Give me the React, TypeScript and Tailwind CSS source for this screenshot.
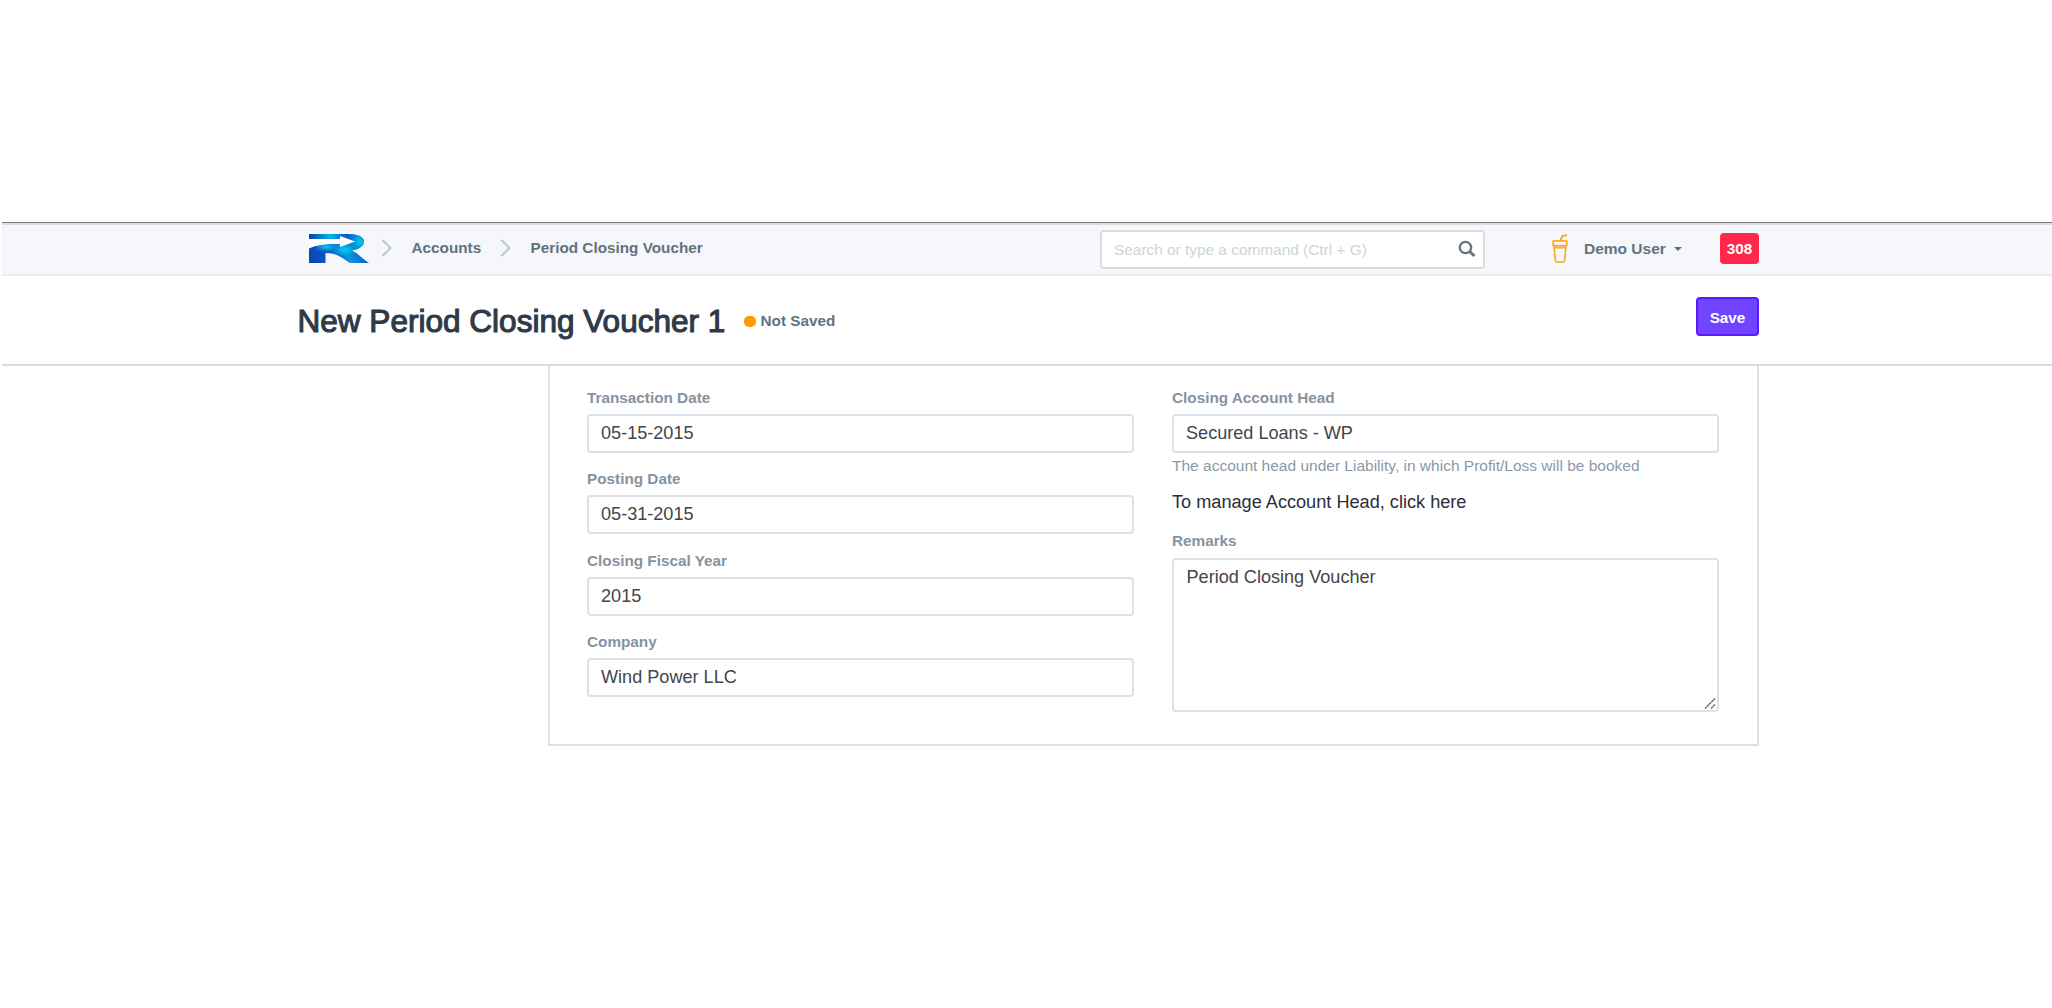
import React from "react";

function Logo() {
  return (
    <svg className="mt-[9px] block h-[29px] w-[60px] shrink-0" viewBox="0 0 60 29">
      <defs>
        <linearGradient id="top" x1="0" y1="0" x2="1" y2="0">
          <stop offset="0" stopColor="#0a3fae" />
          <stop offset="0.35" stopColor="#04b4ea" />
          <stop offset="0.62" stopColor="#0b5cc4" />
          <stop offset="0.85" stopColor="#0a9fe0" />
          <stop offset="1" stopColor="#0a5bc0" />
        </linearGradient>
        <linearGradient id="leg" x1="0" y1="0.6" x2="1" y2="0.4">
          <stop offset="0" stopColor="#0b48b8" />
          <stop offset="0.3" stopColor="#0b58c8" />
          <stop offset="0.6" stopColor="#0898dc" />
          <stop offset="1" stopColor="#0a4bb8" />
        </linearGradient>
        <radialGradient id="glow">
          <stop offset="0" stopColor="#00d0f0" />
          <stop offset="1" stopColor="#00c0ec" stopOpacity="0" />
        </radialGradient>
        <clipPath id="shape">
          <path d="M0 0H38C49 0 55 3 55 7.500C55 12 50 15.500 43 16.500C49.500 19.500 53 24.500 60 29H41C34 25 29 19 16.500 19V29H0Z" />
        </clipPath>
      </defs>
      <g clipPath="url(#shape)">
        <rect width="60" height="29" fill="url(#leg)" />
        <rect width="60" height="9" fill="url(#top)" />
        <ellipse cx="51" cy="9" rx="10" ry="8" fill="url(#glow)" />
        <ellipse cx="17" cy="13" rx="12" ry="5" fill="url(#glow)" />
        <ellipse cx="36" cy="16" rx="12" ry="6" fill="url(#glow)" />
      </g>
      <path d="M0 5H31V2L46 7.500L31 13V10C17 9.500 7 11 0 14.500Z" fill="#fff" />
    </svg>
  );
}

function Chevron({ className }: { className: string }) {
  return (
    <svg className={"block h-[20px] w-[12px] shrink-0 " + className} viewBox="0 0 12 20" fill="none">
      <path d="M1.500 2L9.500 10L1.500 18" stroke="#bcc5d0" strokeWidth="2" />
    </svg>
  );
}

function Field({ label, value }: { label: string; value: string }) {
  return (
    <div className="mb-[16.300px]">
      <div className="h-[26px] text-[15.300px] leading-[20px] font-bold text-[#8593a1]">{label}</div>
      <div className="h-[39px] rounded-[4px] border-2 border-[#dbe1e6] pl-[12px] text-[18.100px] leading-[34px] text-[#43454a]">
        {value}
      </div>
    </div>
  );
}

export default function App() {
  return (
    <div className="h-[1008px] w-[2052px] overflow-hidden bg-white pt-[222px] pl-[2px] font-['Liberation_Sans',Arial,sans-serif]">
      <header className="h-[53.500px] border-t border-t-[#7b797e]">
        <nav className="flex h-[53px] items-start border-t-2 border-b-2 border-t-[#dddce0] border-b-[#eaeef2] bg-[#f5f7fb] pl-[307px] text-[15.300px] leading-[20px] font-bold text-[#63727f]">
          <Logo />
          <Chevron className="mt-[13px] ml-[12px]" />
          <span className="mt-[13px] w-[90px] pl-[18.500px] whitespace-nowrap">Accounts</span>
          <Chevron className="mt-[13px] ml-[17px]" />
          <span className="mt-[13px] w-[588px] pl-[18.500px] whitespace-nowrap">Period Closing Voucher</span>
          <div className="mt-[5px] flex h-[39px] w-[385px] shrink-0 items-start rounded-[4px] border-2 border-[#d6dde2] bg-white pl-[12px]">
            <span className="mt-[8px] w-[344px] text-[15.400px] leading-[20px] font-normal text-[#ccd5dc]">
              Search or type a command (Ctrl + G)
            </span>
            <svg className="mt-[8px] block h-[18px] w-[18px] shrink-0" viewBox="0 0 18 18" fill="none" stroke="#66727f">
              <circle cx="7.500" cy="7.500" r="5.700" strokeWidth="2.300" />
              <path d="M11.500 11.500L16.500 16" strokeWidth="3" />
            </svg>
          </div>
          <svg className="mt-[9px] ml-[67px] block h-[30px] w-[17px] shrink-0" viewBox="0 0 17 30" fill="none" stroke="#fda922" strokeWidth="1.700">
            <rect x="1" y="6.800" width="14" height="4.800" rx="0.800" />
            <path d="M2 11.500L3.300 26.500Q3.500 28 5 28H11Q12.500 28 12.700 26.500L14 11.500M2.500 13.700H13.700" />
            <path d="M8.500 6.500L10.200 2.500Q10.700 1.600 15 1.300" strokeWidth="2" />
          </svg>
          <span className="mt-[14px] ml-[15px] w-[90px] shrink-0 text-[15.500px] whitespace-nowrap">Demo User</span>
          <span className="mt-[22px] block h-0 w-0 shrink-0 border-x-[4px] border-t-[4.500px] border-x-transparent border-t-[#63727f]" />
          <span className="mt-[8px] ml-[38px] h-[31px] w-[39px] shrink-0 rounded-[4px] bg-[#ff2849] text-center leading-[32px] text-white">
            308
          </span>
        </nav>
      </header>

      <section className="flex h-[90.500px] items-start border-b-2 border-[#d7dde2] pl-[295.500px]">
        <h1 className="mt-[27px] w-[446.500px] text-[31.550px] leading-[36px] font-normal whitespace-nowrap text-[#2f3a48] [-webkit-text-stroke:1.1px_#2f3a48]">
          New Period Closing Voucher 1
        </h1>
        <span className="mt-[40px] block h-[11px] w-[12px] rounded-[5px] bg-[#ff9a00]" />
        <span className="mt-[35px] ml-[4.500px] w-[935.500px] text-[15.300px] leading-[20px] font-bold text-[#63727f]">Not Saved</span>
        <button className="mt-[21.500px] h-[39px] w-[63px] rounded-[4px] border-2 border-[#5e18ff] bg-[#7145ff] text-[15.300px] leading-[37px] font-bold text-white">
          Save
        </button>
      </section>

      <main className="ml-[546px] flex h-[380px] w-[1211px] gap-[38px] border-2 border-t-0 border-[#dbe1e6] pt-[22px] pl-[37px]">
        <div className="w-[547px]">
          <Field label="Transaction Date" value="05-15-2015" />
          <Field label="Posting Date" value="05-31-2015" />
          <Field label="Closing Fiscal Year" value="2015" />
          <Field label="Company" value="Wind Power LLC" />
        </div>
        <div className="w-[547px]">
          <Field label="Closing Account Head" value="Secured Loans - WP" />
          <p className="-mt-[13px] text-[15.500px] leading-[20px] whitespace-nowrap text-[#8b99a6]">
            The account head under Liability, in which Profit/Loss will be booked
          </p>
          <p className="mt-[16px] text-[18.150px] leading-[20px] text-[#2b2d3a]">To manage Account Head, click here</p>
          <div className="mt-[19px] h-[27px] text-[15.300px] leading-[19px] font-bold text-[#8593a1]">Remarks</div>
          <div className="flex h-[154px] justify-between rounded-[4px] border-2 border-[#dbe1e6] pl-[12.500px] text-[18.100px] leading-[35px] text-[#43454a]">
            Period Closing Voucher
            <svg className="mr-px block h-[12px] w-[12px] self-end" viewBox="0 0 12 12" fill="none" stroke="#6c6c6c" strokeWidth="1.500">
              <path d="M1 10.500L11 0.500M7 10.500L11 6.500" strokeDasharray="2.600 0.400" />
            </svg>
          </div>
        </div>
      </main>
    </div>
  );
}
